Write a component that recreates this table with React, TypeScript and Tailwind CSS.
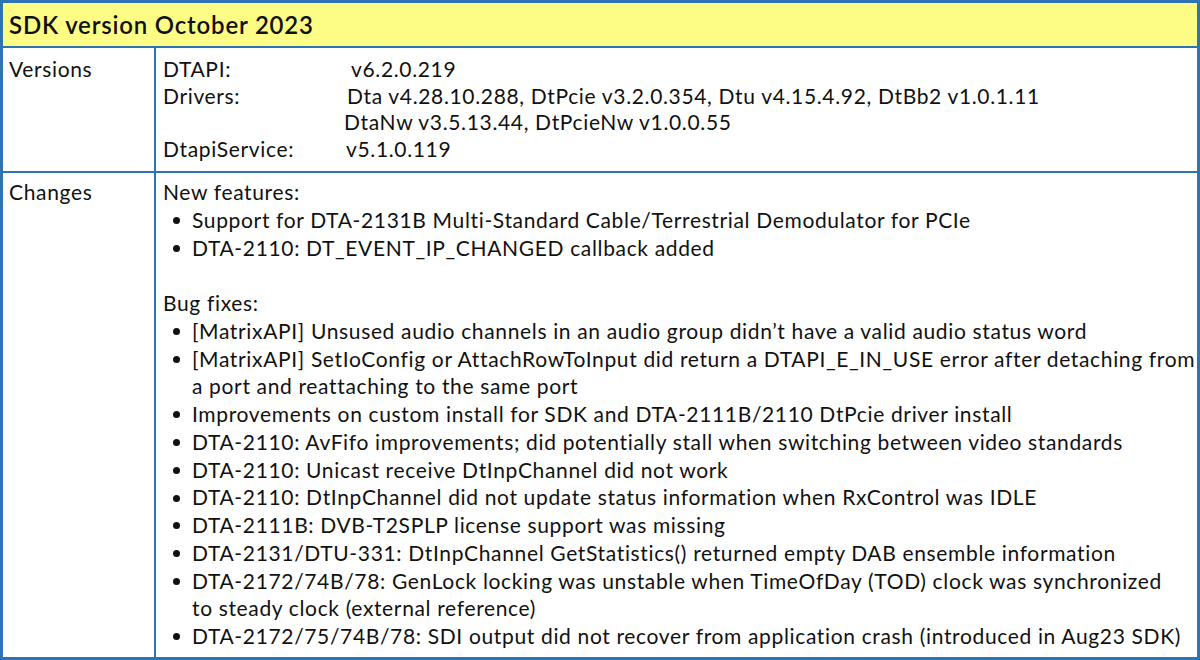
import React from "react";

const font = { fontFamily: "Lato, 'Liberation Sans', sans-serif" };

function Bullet({ children }: { children: React.ReactNode }) {
  return (
    <div className="flex">
      <div className="w-[29px] shrink-0 flex items-center h-[27.75px]">
        <span className="ml-[10px] mt-[2px] w-[7px] h-[7px] rounded-full bg-[#111]" />
      </div>
      <div className="whitespace-nowrap">{children}</div>
    </div>
  );
}

export default function App() {
  return (
    <div className="w-[1200px] h-[660px] bg-white text-[#111]" style={font}>
      <div className="h-full border-[3px] border-[#2e74b5] flex flex-col">
        <div className="h-[45px] shrink-0 bg-[#fdfd86] border-b-2 border-[#2e74b5] flex items-center pl-[6px] text-[24px] font-semibold tracking-[0.8px] pt-[1px]">
          SDK version October 2023
        </div>
        <div className="h-[125px] shrink-0 flex border-b-2 border-[#2e74b5] text-[21px] tracking-[0.65px]">
          <div className="w-[153px] shrink-0 border-r-2 border-[#2e74b5] pl-[6px] pt-[8px] leading-[26.7px]">
            Versions
          </div>
          <div className="flex-1 pl-[7px] pt-[8px] leading-[26.7px]">
            <div className="grid grid-cols-[184px_1fr] whitespace-nowrap">
              <div>DTAPI:</div>
              <div className="pl-[4px]">v6.2.0.219</div>
              <div>Drivers:</div>
              <div>Dta v4.28.10.288, DtPcie v3.2.0.354, Dtu v4.15.4.92, DtBb2 v1.0.1.11</div>
              <div></div>
              <div className="-ml-[3px]">DtaNw v3.5.13.44, DtPcieNw v1.0.0.55</div>
              <div>DtapiService:</div>
              <div className="-ml-[1px]">v5.1.0.119</div>
            </div>
          </div>
        </div>
        <div className="flex-1 flex text-[21px] tracking-[0.65px]">
          <div className="w-[153px] shrink-0 border-r-2 border-[#2e74b5] pl-[6px] pt-[5px] leading-[27.75px]">
            Changes
          </div>
          <div className="flex-1 pl-[7px] pt-[5px] leading-[27.75px]">
            <div>New features:</div>
            <Bullet>Support for DTA-2131B Multi-Standard Cable/Terrestrial Demodulator for PCIe</Bullet>
            <Bullet>DTA-2110: DT_EVENT_IP_CHANGED callback added</Bullet>
            <div className="h-[27.75px]" />
            <div>Bug fixes:</div>
            <Bullet>[MatrixAPI] Unsused audio channels in an audio group didn’t have a valid audio status word</Bullet>
            <Bullet>
              [MatrixAPI] SetIoConfig or AttachRowToInput did return a DTAPI_E_IN_USE error after detaching from
              <br />a port and reattaching to the same port
            </Bullet>
            <Bullet>Improvements on custom install for SDK and DTA-2111B/2110 DtPcie driver install</Bullet>
            <Bullet>DTA-2110: AvFifo improvements; did potentially stall when switching between video standards</Bullet>
            <Bullet>DTA-2110: Unicast receive DtInpChannel did not work</Bullet>
            <Bullet>DTA-2110: DtInpChannel did not update status information when RxControl was IDLE</Bullet>
            <Bullet>DTA-2111B: DVB-T2SPLP license support was missing</Bullet>
            <Bullet>DTA-2131/DTU-331: DtInpChannel GetStatistics() returned empty DAB ensemble information</Bullet>
            <Bullet>
              DTA-2172/74B/78: GenLock locking was unstable when TimeOfDay (TOD) clock was synchronized
              <br />to steady clock (external reference)
            </Bullet>
            <Bullet>DTA-2172/75/74B/78: SDI output did not recover from application crash (introduced in Aug23 SDK)</Bullet>
          </div>
        </div>
      </div>
    </div>
  );
}
